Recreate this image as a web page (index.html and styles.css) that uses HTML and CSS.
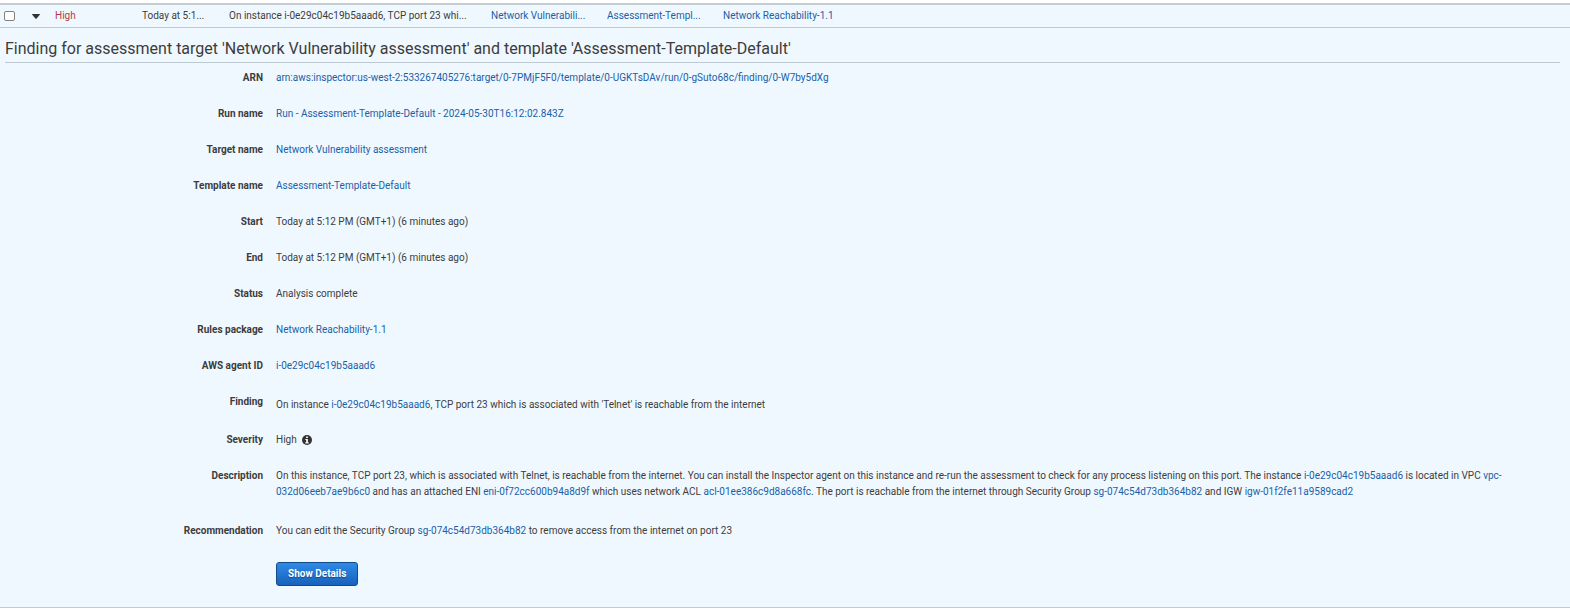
FILE: index.html
```html
<!DOCTYPE html>
<html lang="en">
<head>
<meta charset="utf-8">
<title>Inspector findings</title>
<link rel="stylesheet" href="styles.css">
</head>
<body>
<main class="finding">
  <div class="summary">
    <input class="summary-check" type="checkbox" aria-label="Select finding">
    <button class="toggle" type="button" aria-label="Collapse finding" aria-expanded="true"><svg width="8" height="5" viewBox="0 0 8 5"><path d="M0 0.5 Q0 0 0.5 0 H7.5 Q8 0 8 0.5 L4.4 4.7 Q4 5 3.6 4.7 Z" fill="#333"/></svg></button>
    <span class="cell high">High</span>
    <span class="cell">Today at 5:1...</span>
    <span class="cell">On instance i-0e29c04c19b5aaad6, TCP port 23 whi...</span>
    <a class="cell" href="#">Network Vulnerabili...</a>
    <a class="cell" href="#">Assessment-Templ...</a>
    <a class="cell" href="#">Network Reachability-1.1</a>
  </div>
  <section class="details">
    <h1 class="title">Finding for assessment target 'Network Vulnerability assessment' and template 'Assessment-Template-Default'</h1>
    <dl class="fields">
      <div class="field"><dt>ARN</dt><dd><a href="#">arn:aws:inspector:us-west-2:533267405276:target/0-7PMjF5F0/template/0-UGKTsDAv/run/0-gSuto68c/finding/0-W7by5dXg</a></dd></div>
      <div class="field"><dt>Run name</dt><dd><a href="#">Run - Assessment-Template-Default - 2024-05-30T16:12:02.843Z</a></dd></div>
      <div class="field"><dt>Target name</dt><dd><a href="#">Network Vulnerability assessment</a></dd></div>
      <div class="field"><dt>Template name</dt><dd><a href="#">Assessment-Template-Default</a></dd></div>
      <div class="field"><dt>Start</dt><dd>Today at 5:12 PM (GMT+1) (6 minutes ago)</dd></div>
      <div class="field"><dt>End</dt><dd>Today at 5:12 PM (GMT+1) (6 minutes ago)</dd></div>
      <div class="field"><dt>Status</dt><dd>Analysis complete</dd></div>
      <div class="field"><dt>Rules package</dt><dd><a href="#">Network Reachability-1.1</a></dd></div>
      <div class="field"><dt>AWS agent ID</dt><dd><a href="#">i-0e29c04c19b5aaad6</a></dd></div>
      <div class="field field-message"><dt>Finding</dt><dd>On instance <a href="#">i-0e29c04c19b5aaad6</a>, TCP port 23 which is associated with 'Telnet' is reachable from the internet</dd></div>
      <div class="field"><dt>Severity</dt><dd class="severity">High <svg class="info" width="10" height="10" viewBox="0 0 10 10" role="img" aria-label="Information"><circle cx="5" cy="5" r="5" fill="#333"/><path d="M4.1 1.4h1.8v1.5H4.1zM3.3 4h2.6v3.3h.8v1.1H3.3V7.3h.8V5.1h-.8z" fill="#f0f8ff"/></svg></dd></div>
      <div class="field field-long"><dt>Description</dt><dd>On this instance, TCP port 23, which is associated with Telnet, is reachable from the internet. You can install the Inspector agent on this instance and re-run the assessment to check for any process listening on this port. The instance <a href="#">i-0e29c04c19b5aaad6</a> is located in VPC <a href="#">vpc-032d06eeb7ae9b6c0</a> and has an attached ENI <a href="#">eni-0f72cc600b94a8d9f</a> which uses network ACL <a href="#">acl-01ee386c9d8a668fc</a>. The port is reachable from the internet through Security Group <a href="#">sg-074c54d73db364b82</a> and IGW <a href="#">igw-01f2fe11a9589cad2</a></dd></div>
      <div class="field"><dt>Recommendation</dt><dd>You can edit the Security Group <a href="#">sg-074c54d73db364b82</a> to remove access from the internet on port 23</dd></div>
    </dl>
    <div class="actions"><button class="primary" type="button">Show Details</button></div>
  </section>
</main>
</body>
</html>
```
FILE: styles.css
```css
* {
  box-sizing: border-box;
}

body {
  margin: 0;
  padding-top: 3px;
  background: #fff;
  color: #3c3c3c;
  font: 10px/16px Roboto, "Liberation Sans", sans-serif;
}

a {
  color: #1a5fa8;
  text-decoration: none;
}

.finding {
  background: #f0f8ff;
  border-top: 2px solid #c5cdd4;
  border-bottom: 1px solid #c3cbd2;
}

.summary {
  display: grid;
  grid-template-columns: 28px 23px 87px 87px 262px 116px 116px 1fr;
  align-items: center;
  height: 23px;
  padding-left: 4px;
  border-bottom: 1px solid #bfc9d1;
}

.summary-check {
  appearance: none;
  width: 11px;
  height: 10px;
  margin: 0;
  background: #fff;
  border: 1px solid #808080;
  border-radius: 2px;
}

.summary-check:checked {
  background: #1a5fa8;
}

.toggle {
  display: flex;
  width: 8px;
  padding: 0;
  background: none;
  border: 0;
}

.cell {
  white-space: nowrap;
}

.high {
  color: #b03a48;
}

.details {
  padding: 8px 10px 21px 5px;
}

.title {
  margin: 0;
  padding: 3px 0;
  border-bottom: 1px solid #bfc9d1;
  font-size: 16px;
  font-weight: 400;
  line-height: 20px;
}

.fields {
  margin: 0;
  padding-top: 7px;
}

.field {
  display: grid;
  grid-template-columns: 258px 1fr;
  column-gap: 13px;
  padding-right: 32px;
  padding-bottom: 20px;
}

.field dt {
  font-weight: 700;
  text-align: right;
}

.field dd {
  margin: 0;
}

.field-message {
  padding-bottom: 19px;
}

.field-message dd {
  padding-top: 3px;
}

.severity {
  display: flex;
  align-items: center;
  gap: 5px;
}

.field-long {
  padding-bottom: 23px;
}

.actions {
  padding: 3px 0 0 271px;
}

.primary {
  display: block;
  height: 24px;
  padding: 0 11px;
  color: #fff;
  background: linear-gradient(#2f8ae6, #1762bc);
  border: 1px solid #124a8c;
  border-radius: 3px;
  font: 700 10px/20px Roboto, "Liberation Sans", sans-serif;
  text-shadow: 0 1px 1px #124a8c;
}
```
